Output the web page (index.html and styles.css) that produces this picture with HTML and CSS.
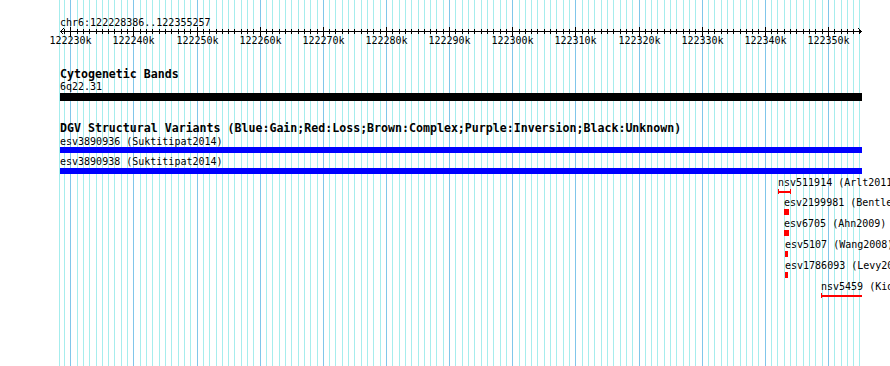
FILE: index.html
```html
<!DOCTYPE html>
<html lang="en">
<head>
  <meta charset="UTF-8">
  <title>chr6:122228386..122355257</title>
  <link rel="stylesheet" href="styles.css">
</head>
<body>

  <div class="panel">
    <svg class="grid" id="grid" width="890" height="366"></svg>

    <div class="tracks">
      <!-- Линейка -->
      <div class="segment-name">chr6:122228386..122355257</div>
      <svg class="scale" id="scale" width="890" height="22"></svg>

      <!-- Cytogenetic Bands -->
      <div class="track cyto">
        <div class="track-title">Cytogenetic Bands</div>
        <div class="label tight">6q22.31</div>
        <div class="band"></div>
      </div>

      <!-- DGV -->
      <div class="track dgv">
        <div class="track-title">DGV Structural Variants (Blue:Gain;Red:Loss;Brown:Complex;Purple:Inversion;Black:Unknown)</div>
        <div class="label">esv3890936 (Suktitipat2014)</div>
        <div class="gain tight"></div>
        <div class="label second">esv3890938 (Suktitipat2014)</div>
        <div class="gain"></div>
      </div>

      <div class="features">
        <div class="feature" style="margin-left: 778px">
          <div class="label">nsv511914 (Arlt2011)</div>
          <div class="loss-span" style="width: 13px"></div>
        </div>
        <div class="feature" style="margin-left: 784px">
          <div class="label">esv2199981 (Bentley2008)</div>
          <div class="loss" style="width: 5px"></div>
        </div>
        <div class="feature" style="margin-left: 784px">
          <div class="label">esv6705 (Ahn2009)</div>
          <div class="loss" style="width: 5px"></div>
        </div>
        <div class="feature" style="margin-left: 785px">
          <div class="label">esv5107 (Wang2008)</div>
          <div class="loss" style="width: 3px"></div>
        </div>
        <div class="feature" style="margin-left: 785px">
          <div class="label">esv1786093 (Levy2007)</div>
          <div class="loss" style="width: 3px"></div>
        </div>
        <div class="feature" style="margin-left: 821px">
          <div class="label">nsv5459 (Kidd2008)</div>
          <div class="loss-span open" style="width: 41px"></div>
        </div>
      </div>
    </div>
  </div>

  <script src="script.js"></script>
</body>
</html>
```

FILE: styles.css
```css
body {
  margin: 0;
  background-color: #fff;
  color: #000;
  font-family: "DejaVu Sans Mono", "Liberation Mono", monospace;
}
.panel {
  position: relative;
  width: 890px;
  height: 366px;
  overflow: hidden;
}
.grid {
  position: absolute;
  top: 0;
  left: 0;
  z-index: 0;
}
.grid line {
  stroke: #a6eded;
  shape-rendering: crispEdges;
}
.grid line.major {
  stroke: #80c6ea;
}
.tracks {
  position: relative;
  z-index: 1;
}
.segment-name {
  padding: 16px 0 0 60px;
  font-size: 10px;
  line-height: 13px;
  height: 13px;
}
.scale {
  display: block;
  margin-top: -3px;
  overflow: visible;
}
.scale line {
  stroke: #000;
  shape-rendering: crispEdges;
}
.scale text {
  font-family: "DejaVu Sans Mono", "Liberation Mono", monospace;
  font-size: 10px;
  text-anchor: middle;
  fill: #000;
}
.track {
  padding-left: 60px;
}
.cyto {
  margin-top: 19px;
}
.dgv {
  margin-top: 20px;
}
.track-title {
  font-weight: bold;
  font-size: 11.6px;
  line-height: 14px;
  height: 14px;
  white-space: nowrap;
}
.label {
  font-size: 10px;
  line-height: 13px;
  height: 13px;
  white-space: nowrap;
}
.tight {
  margin-top: -1px;
}
.second {
  margin-top: 2px;
}
.band {
  width: 802px;
  height: 8px;
  background-color: #000;
}
.gain {
  width: 802px;
  height: 6px;
  background-color: #00f;
}
.features {
  margin-top: 1px;
}
.feature {
  margin-top: 2px;
}
.loss {
  height: 6px;
  background-color: #f00;
}
.loss-span {
  box-sizing: border-box;
  height: 5px;
  border-left: 1px solid #f00;
  border-right: 1px solid #f00;
  background: linear-gradient(#f00, #f00) 0 2px / 100% 2px no-repeat;
  margin-bottom: 1px;
}
.loss-span.open {
  border-right: none;
}
```

FILE: script.js
```js
const segStart = 122228386;
const segEnd = 122355257;
const leftEdge = 60.1;
const plotWidth = 801;
const bpPx = plotWidth / (segEnd - segStart);
const svgNS = "http://www.w3.org/2000/svg";

function xOf(pos) {
  return Math.round(leftEdge + (pos - segStart) * bpPx) + 0.5;
}

function addLine(svg, x1, y1, x2, y2, cls) {
  const l = document.createElementNS(svgNS, "line");
  l.setAttribute("x1", x1);
  l.setAttribute("y1", y1);
  l.setAttribute("x2", x2);
  l.setAttribute("y2", y2);
  if (cls) l.setAttribute("class", cls);
  svg.appendChild(l);
}

const grid = document.getElementById("grid");
const scale = document.getElementById("scale");

// левая граница
addLine(grid, 59.5, 0, 59.5, 366);

// прямая линейки и стрелки
addLine(scale, 60, 5.5, 861, 5.5);
addLine(scale, 60.5, 5.5, 63.5, 2.5);
addLine(scale, 60.5, 5.5, 63.5, 8.5);
addLine(scale, 861.5, 5.5, 858.5, 2.5);
addLine(scale, 861.5, 5.5, 858.5, 8.5);

for (let k = Math.ceil(segStart / 1000); k * 1000 <= segEnd; k++) {
  const x = xOf(k * 1000);
  const major = k % 10 === 0;
  addLine(grid, x, 0, x, 366, major ? "major" : "");
  if (major) {
    addLine(scale, x, 1, x, 10);
    const t = document.createElementNS(svgNS, "text");
    t.setAttribute("x", x);
    t.setAttribute("y", 18);
    t.textContent = k + "k";
    scale.appendChild(t);
  } else {
    addLine(scale, x, 3, x, 8);
  }
}
```
